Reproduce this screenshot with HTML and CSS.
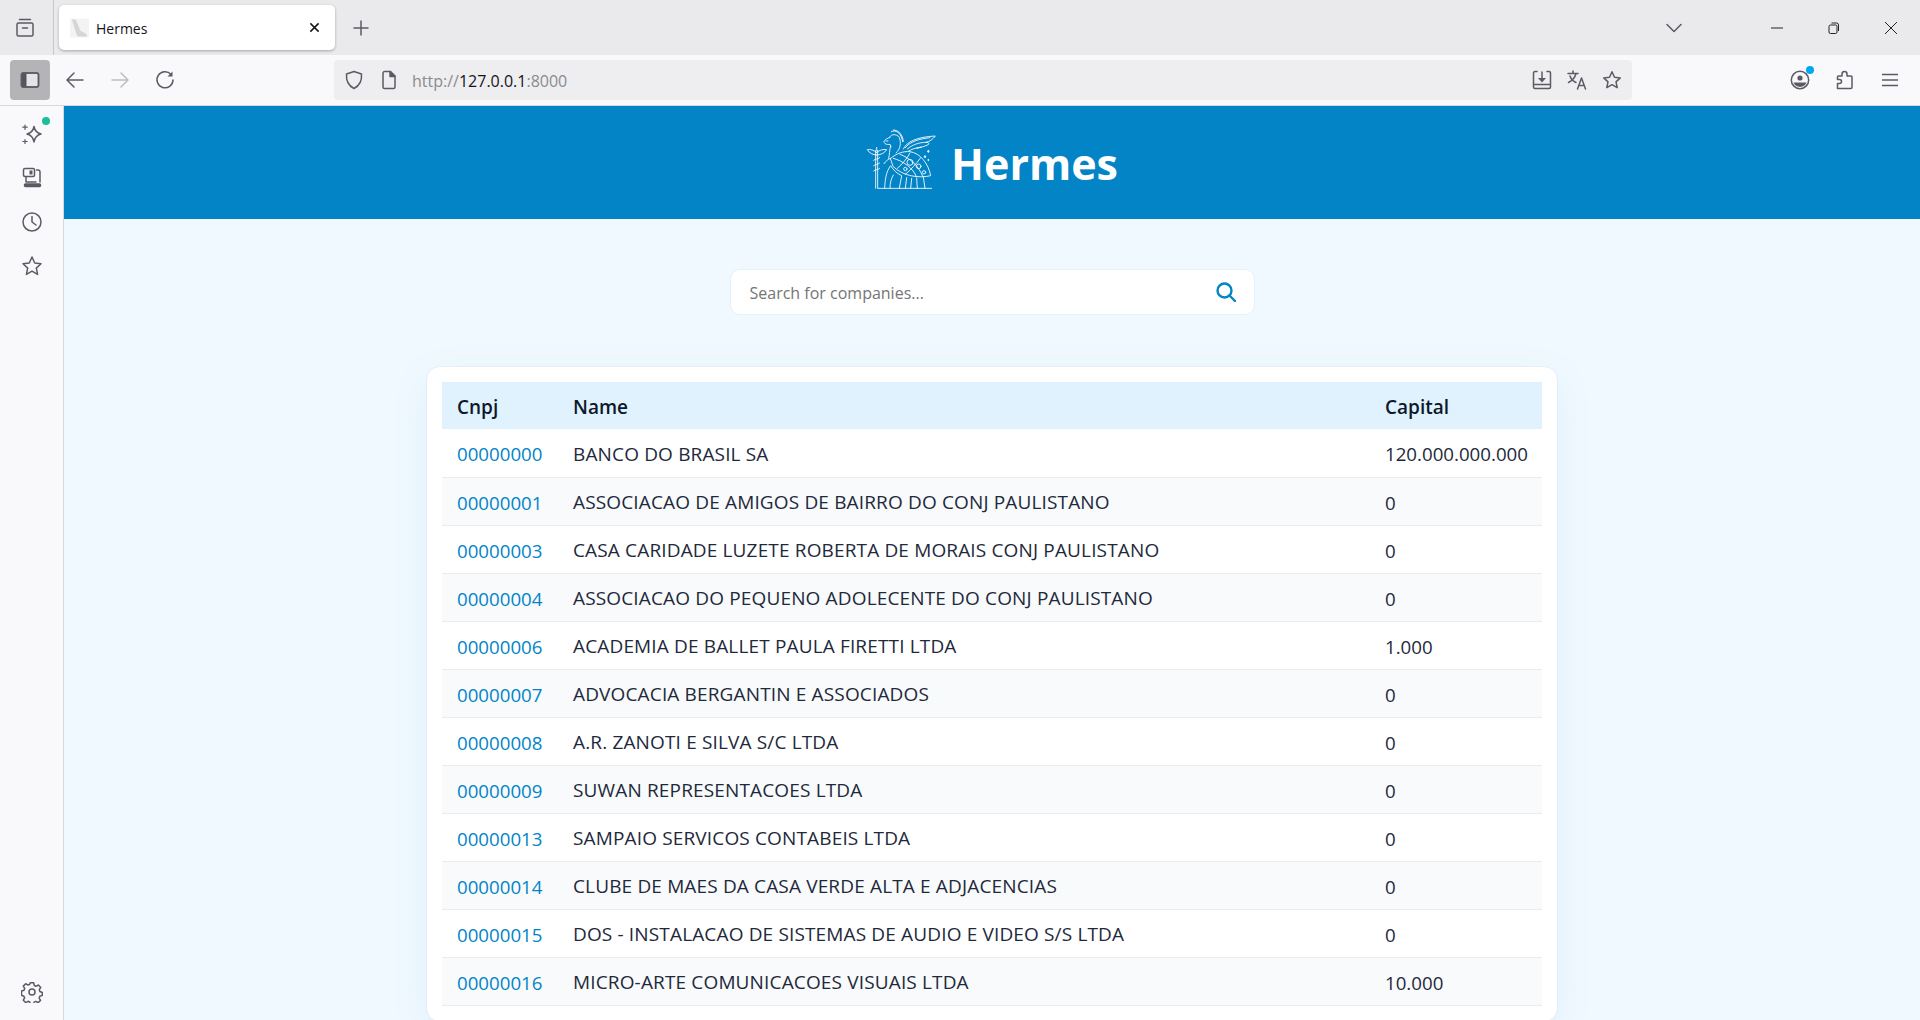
FILE: index.html
```html
<!DOCTYPE html>
<html lang="en">
<head>
  <meta charset="UTF-8">
  <meta name="viewport" content="width=device-width, initial-scale=1.0">
  <title>Hermes</title>
  <link rel="stylesheet" href="styles.css">
</head>
<body>
  <div class="tabstrip">
    <div class="slot view-slot">
      <svg class="icon" viewBox="0 0 20 20"><path d="M4.500 1.500h11M3.500 5h13a1.500 1.500 0 0 1 1.500 1.500v10a1.500 1.500 0 0 1-1.500 1.500h-13A1.500 1.500 0 0 1 2 16.500v-10A1.500 1.500 0 0 1 3.500 5zM7.500 10h5"/></svg>
    </div>
    <div class="tab">
      <svg class="favicon" viewBox="0 0 20 20"><rect width="20" height="20" fill="#f3f3f3"/><path d="M2 1l4 13 2 5h10l-1-3-6-3-5-12z" fill="#d5d5d3"/></svg>
      <span class="tab-title">Hermes</span>
      <svg class="tab-close" viewBox="0 0 12 12"><path d="M1.500 1.500l9 9M10.500 1.500l-9 9"/></svg>
    </div>
    <div class="slot new-tab">
      <svg class="icon plus" viewBox="0 0 16 16"><path d="M8 1v14M1 8h14"/></svg>
    </div>
    <div class="grow"></div>
    <svg class="icon chevron" viewBox="0 0 16 10"><path d="M1 1.500l7 7 7-7"/></svg>
    <div class="window-btns">
      <svg class="win-icon" viewBox="0 0 12 12"><path d="M0 6h12"/></svg>
      <svg class="win-icon" viewBox="0 0 12 12"><rect x="1" y="3" width="8" height="8.500" rx="1.500"/><path d="M3.500 1h5a2 2 0 0 1 2 2v6"/></svg>
      <svg class="win-icon" viewBox="0 0 12 12"><path d="M0 0l12 12M12 0L0 12"/></svg>
    </div>
  </div>

  <div class="toolbar">
    <div class="sidebar-btn">
      <svg class="icon" viewBox="0 0 20 20"><rect x="1.500" y="3" width="17" height="14" rx="2" fill="#e4e4e6"/><rect x="1.500" y="3" width="5" height="14" rx="1.500" fill="#55555c" stroke="none"/><rect x="1.500" y="3" width="17" height="14" rx="2" fill="none"/></svg>
    </div>
    <div class="slot nav-slot">
      <svg class="icon" viewBox="0 0 20 20"><path d="M18 10H2.500M9 3l-7 7 7 7"/></svg>
    </div>
    <div class="slot nav-slot faded">
      <svg class="icon" viewBox="0 0 20 20"><path d="M2 10h15.500M11 3l7 7-7 7"/></svg>
    </div>
    <div class="slot nav-slot">
      <svg class="icon" viewBox="0 0 20 20"><path d="M16 4.500A8 8 0 1 0 18 10"/><path d="M17.500 1.500v5h-5" fill="#5b5b66" stroke="none"/></svg>
    </div>
    <div class="urlbar">
      <svg class="icon url-icon" viewBox="0 0 20 20"><path d="M10 1.500l7.500 2.500c.5 6.500-1.500 11.500-7.500 14.500C4 15.500 2 10.500 2.500 4z"/></svg>
      <svg class="icon url-icon doc" viewBox="0 0 20 20"><path d="M4 3a1.500 1.500 0 0 1 1.500-1.500h6L16 6v11a1.500 1.500 0 0 1-1.500 1.500h-9A1.500 1.500 0 0 1 4 17z"/><path d="M11 1.500L16 6.500h-5z" fill="#5b5b66"/></svg>
      <span class="url"><span class="url-dim">http://</span>127.0.0.1<span class="url-dim">:8000</span></span>
      <div class="grow"></div>
      <svg class="icon url-action" viewBox="0 0 20 20"><path d="M5 1.500H3a1.500 1.500 0 0 0-1.500 1.500v14A1.500 1.500 0 0 0 3 18.500h14a1.500 1.500 0 0 0 1.500-1.500V3A1.500 1.500 0 0 0 17 1.500h-2M2 14.500h16M10 2v8"/><path d="M6 8h8l-4 4.500z" fill="#5b5b66" stroke="none"/></svg>
      <svg class="icon url-action" viewBox="0 0 20 20"><path d="M1 3.500h10M6 1v2.500M9 3.500c-1 4-3.500 7-7.500 9M3 6c1 3 3.500 5.500 6 6.500M10.500 19l4-11 4 11M12 15.500h5"/></svg>
      <svg class="icon url-action" viewBox="0 0 20 20"><path d="M10 1.800l2.500 5.400 5.800.7-4.300 4 1.200 5.800-5.200-3-5.200 3 1.200-5.800-4.300-4 5.800-.7z"/></svg>
    </div>
    <div class="grow"></div>
    <div class="account">
      <svg class="icon" viewBox="0 0 20 20"><circle cx="10" cy="10" r="8.700"/><circle cx="10" cy="8" r="2.600" fill="#5b5b66" stroke="none"/><path d="M3.500 12.500h13a7 7 0 0 1-13 0z" fill="#5b5b66" stroke="none"/></svg>
      <span class="account-dot"></span>
    </div>
    <svg class="icon ext" viewBox="0 0 20 20"><path d="M2.500 18.500v-5h2a2 2 0 0 0 0-4h-2V7a1 1 0 0 1 1-1h3.500V4a2.500 2.500 0 0 1 5 0v2h4a1 1 0 0 1 1 1v10.500a1 1 0 0 1-1 1z"/></svg>
    <svg class="icon burger" viewBox="0 0 16 16"><path d="M0 2.500h16M0 8h16M0 13.500h16"/></svg>
  </div>

  <div class="workspace">
    <aside class="sidebar">
      <div class="side-item">
        <svg class="icon" viewBox="0 0 22 22"><path d="M13 3.500c.8 4.300 2.700 6.500 7 7.500-4.300 1-6.200 3.200-7 8-.8-4.800-2.700-7-7-8 4.300-1 6.200-3.200 7-7.500z"/><path d="M4 2v4.500M1.800 4.200h4.400M4 16.500v4M1.800 18.500h4.400" class="thin"/></svg>
        <span class="side-dot"></span>
      </div>
      <div class="side-item">
        <svg class="icon" viewBox="0 0 22 22"><rect x="2.500" y="1.500" width="11" height="8" rx="1.500"/><rect x="8.500" y="3.500" width="3" height="4" fill="#5b5b66" stroke="none"/><path d="M15.500 3h1.500a2 2 0 0 1 2 2v10M5 10v5h10"/><rect x="3.500" y="17" width="16" height="2.500" rx="1" fill="#5b5b66"/></svg>
      </div>
      <div class="side-item">
        <svg class="icon" viewBox="0 0 22 22"><circle cx="11" cy="11" r="9"/><path d="M11 5.500V11l4 3"/></svg>
      </div>
      <div class="side-item">
        <svg class="icon" viewBox="0 0 22 22"><path d="M11 2l2.700 6 6.300.8-4.700 4.300 1.300 6.300L11 16.200l-5.600 3.200 1.300-6.300L2 8.800 8.300 8z"/></svg>
      </div>
      <div class="grow"></div>
      <div class="side-item">
        <svg class="icon" viewBox="0 0 22 22"><circle cx="11" cy="11" r="3"/><path d="M9.300 1.800h3.400l.6 2.700 1.700.8 2.400-1.300 2.300 2.500-1.400 2.200.6 1.800 2.400 1v2.900l-2.500.9-.6 1.800 1.300 2.300-2.400 2.300-2.300-1.300-1.700.7-.7 2.400H9.400l-.7-2.500-1.700-.7-2.300 1.300-2.400-2.400 1.300-2.300-.7-1.700-2.400-.9V10l2.500-.8.700-1.800-1.400-2.300 2.400-2.400 2.300 1.400 1.700-.8z"/></svg>
      </div>
    </aside>

    <main class="page">
      <header class="site-header">
        <svg class="logo" viewBox="0 0 252 210">
          <path d="M55 190H215"/>
          <!-- caduceus -->
          <path d="M47 190V76M53 190V76M50 76v-9"/>
          <path d="M50 82C40 75 31 72 22 74c5 10 17 16 28 16M50 82c10-7 19-10 30-8-6 10-18 16-30 16"/>
          <path d="M41 106c6-6 12-2 18-8M41 122c6-6 12-2 18-8M41 138c6-6 12-2 18-8"/>
          <!-- head and helmet -->
          <path d="M94 20c14-8 30 4 34 30M100 15c16 0 28 14 30 34M89 36c6-9 18-10 29 0"/>
          <path d="M90 37c-8 3-16 7-18 13 0 6 8 10 18 8l3 8M118 38c6 14 4 34-10 46M92 62c-4 14-3 26-6 38"/>
          <path d="M78 48h6"/>
          <!-- wing -->
          <path d="M130 72c10-22 40-36 96-39-8 9-16 17-28 19 6 0 10 2 8 6-10 6-26 10-36 12"/>
          <path d="M136 68c14-18 39-26 74-30M142 72c14-12 34-20 56-20M146 78c14-8 26-10 38-12"/>
          <!-- shell -->
          <path d="M92 100c18-15 38-22 58-20 30 4 55 35 62 72-32 8-82 3-112-27z"/>
          <path d="M100 100c30 8 60 30 70 56M120 88c28 10 56 34 68 66M150 84c-10 18-22 32-38 46M182 98c-14 20-30 36-46 50"/>
          <circle cx="150" cy="112" r="9"/><circle cx="176" cy="124" r="7"/><circle cx="136" cy="132" r="5"/><circle cx="192" cy="142" r="5"/>
          <!-- arm and legs -->
          <path d="M72 116c6-8 12-14 20-16M74 190c1-25 4-50 18-68 8 13 18 23 33 30l-7 38M90 190c0-18 4-30 10-40"/>
          <path d="M140 158l-4 32M155 160l-3 30M170 160l2 30M190 156l5 34"/>
          <path class="logo-fill" d="M205 74l4 5-4 5-4-5zM195 90l4 5-4 5-4-5zM205 101l3 4-3 4-3-4z"/>
        </svg>
        <h1 class="site-title">Hermes</h1>
      </header>

      <div class="search">
        <input class="search-input" type="text" placeholder="Search for companies...">
        <svg class="search-icon" viewBox="0 0 20 20"><circle cx="8.500" cy="8.500" r="7"/><path d="M13.500 13.500L19 19"/></svg>
      </div>

      <section class="card">
        <table class="companies">
          <colgroup>
            <col class="col-cnpj"><col class="col-name"><col class="col-capital">
          </colgroup>
          <thead>
            <tr><th>Cnpj</th><th>Name</th><th>Capital</th></tr>
          </thead>
          <tbody>
            <tr><td><a href="#">00000000</a></td><td class="name">BANCO DO BRASIL SA</td><td>120.000.000.000</td></tr>
            <tr><td><a href="#">00000001</a></td><td class="name">ASSOCIACAO DE AMIGOS DE BAIRRO DO CONJ PAULISTANO</td><td>0</td></tr>
            <tr><td><a href="#">00000003</a></td><td class="name">CASA CARIDADE LUZETE ROBERTA DE MORAIS CONJ PAULISTANO</td><td>0</td></tr>
            <tr><td><a href="#">00000004</a></td><td class="name">ASSOCIACAO DO PEQUENO ADOLECENTE DO CONJ PAULISTANO</td><td>0</td></tr>
            <tr><td><a href="#">00000006</a></td><td class="name">ACADEMIA DE BALLET PAULA FIRETTI LTDA</td><td>1.000</td></tr>
            <tr><td><a href="#">00000007</a></td><td class="name">ADVOCACIA BERGANTIN E ASSOCIADOS</td><td>0</td></tr>
            <tr><td><a href="#">00000008</a></td><td class="name">A.R. ZANOTI E SILVA S/C LTDA</td><td>0</td></tr>
            <tr><td><a href="#">00000009</a></td><td class="name">SUWAN REPRESENTACOES LTDA</td><td>0</td></tr>
            <tr><td><a href="#">00000013</a></td><td class="name">SAMPAIO SERVICOS CONTABEIS LTDA</td><td>0</td></tr>
            <tr><td><a href="#">00000014</a></td><td class="name">CLUBE DE MAES DA CASA VERDE ALTA E ADJACENCIAS</td><td>0</td></tr>
            <tr><td><a href="#">00000015</a></td><td class="name">DOS - INSTALACAO DE SISTEMAS DE AUDIO E VIDEO S/S LTDA</td><td>0</td></tr>
            <tr><td><a href="#">00000016</a></td><td class="name">MICRO-ARTE COMUNICACOES VISUAIS LTDA</td><td>10.000</td></tr>
          </tbody>
        </table>
      </section>
    </main>
  </div>
</body>
</html>
```

FILE: styles.css
```css
* {
  box-sizing: border-box;
}
html, body {
  height: 100%;
}
body {
  margin: 0;
  height: 100vh;
  overflow: hidden;
  display: flex;
  flex-direction: column;
  font-family: "Open Sans", "Noto Sans", sans-serif;
  color: #1e293b;
  background: #f9f9fb;
}
.grow {
  flex: 1;
}
.icon {
  display: block;
  width: 20px;
  height: 20px;
  flex: none;
  fill: none;
  stroke: #5b5b66;
  stroke-width: 1.5;
  stroke-linecap: round;
  stroke-linejoin: round;
}
.slot {
  display: flex;
  align-items: center;
  justify-content: center;
  flex: none;
}

/* tab strip */
.tabstrip {
  height: 55px;
  flex: none;
  display: flex;
  align-items: center;
  background: #eaeaed;
}
.view-slot {
  width: 54px;
  height: 55px;
  border-right: 1px solid #c8c8cc;
  padding-right: 4px;
}
.tab {
  width: 276px;
  height: 45px;
  margin-left: 5px;
  display: flex;
  align-items: center;
  padding: 0 15px 0 11px;
  background: #fff;
  border-radius: 5px;
  box-shadow: 0 1px 3px rgba(0, 0, 0, 0.3);
}
.favicon {
  width: 19px;
  height: 20px;
  flex: none;
}
.tab-title {
  flex: 1;
  margin-left: 7px;
  padding-top: 1px;
  font-size: 14px;
  color: #15141a;
}
.tab-close {
  width: 11px;
  height: 11px;
  fill: none;
  stroke: #15141a;
  stroke-width: 1.6;
}
.new-tab {
  width: 52px;
}
.plus {
  width: 16px;
  height: 16px;
}
.chevron {
  width: 16px;
  height: 10px;
  margin-right: 89px;
}
.window-btns {
  display: flex;
  gap: 45px;
  padding-right: 23px;
}
.win-icon {
  width: 12px;
  height: 12px;
  fill: none;
  stroke: #222;
  stroke-width: 1;
}

/* toolbar */
.toolbar {
  height: 51px;
  flex: none;
  display: flex;
  align-items: center;
  padding: 0 22px 1px 10px;
  background: #f9f9fb;
  border-bottom: 1px solid #d8d8dc;
}
.sidebar-btn {
  width: 40px;
  height: 40px;
  display: flex;
  align-items: center;
  justify-content: center;
  background: #b4b4b7;
  border-radius: 4px;
  margin-right: 2px;
}
.nav-slot {
  width: 45px;
  height: 40px;
}
.faded .icon {
  stroke: #bdbdc2;
}
.urlbar {
  width: 1298px;
  height: 40px;
  margin-left: 147px;
  display: flex;
  align-items: center;
  padding: 0 10px;
  background: #eeeef0;
  border-radius: 4px;
}
.url-icon.doc {
  margin-left: 15px;
}
.url {
  margin-left: 13px;
  padding-top: 2px;
  font-size: 16px;
  color: #15141a;
}
.url-dim {
  color: #8a8a90;
}
.url-action {
  margin-left: 15px;
}
.account {
  position: relative;
}
.account-dot {
  position: absolute;
  top: -4px;
  right: -4px;
  width: 8px;
  height: 8px;
  border-radius: 50%;
  background: #00a8f0;
}
.ext {
  margin-left: 25px;
}
.burger {
  width: 16px;
  height: 16px;
  margin-left: 27px;
}

/* sidebar */
.workspace {
  flex: 1;
  min-height: 0;
  display: flex;
}
.sidebar {
  width: 64px;
  flex: none;
  display: flex;
  flex-direction: column;
  padding: 6px 0;
  background: #f9f9fb;
  border-right: 1px solid #d8d8dc;
}
.side-item {
  position: relative;
  height: 44px;
  display: flex;
  align-items: center;
  justify-content: center;
  padding-left: 1px;
}
.side-item .icon {
  width: 22px;
  height: 22px;
}
.side-item .thin {
  stroke-width: 1.2;
}
.side-dot {
  position: absolute;
  top: 5px;
  left: 42px;
  width: 8px;
  height: 8px;
  border-radius: 50%;
  background: #1dbf98;
}

/* page */
.page {
  flex: 1;
  min-width: 0;
  overflow: hidden;
  background: #f0f9ff;
}
.site-header {
  height: 113px;
  display: flex;
  align-items: center;
  justify-content: center;
  gap: 7px;
  padding-right: 6px;
  background: #0284c7;
}
.logo {
  width: 84px;
  height: 70px;
  margin-bottom: 5px;
  fill: none;
  stroke: #fff;
  stroke-width: 2.6;
  stroke-linecap: round;
  stroke-linejoin: round;
}
.logo-fill {
  fill: #fff;
  stroke: none;
}
.site-title {
  margin: 0;
  padding-top: 2px;
  font-size: 43px;
  font-weight: 700;
  color: #fff;
}
.search {
  position: relative;
  width: 525px;
  margin: 50px auto 51px;
}
.search-input {
  display: block;
  width: 100%;
  height: 46px;
  padding: 2px 50px 0 19px;
  border: 1px solid #e0f2fe;
  border-radius: 10px;
  font: 16px "Open Sans", sans-serif;
  background: #fff;
}
.search-input::placeholder {
  color: #757575;
  opacity: 1;
}
.search-icon {
  position: absolute;
  top: 13px;
  right: 19px;
  width: 20px;
  height: 20px;
  fill: none;
  stroke: #0284c7;
  stroke-width: 2.4;
  stroke-linecap: round;
}
.card {
  width: 1132px;
  margin: 0 auto;
  padding: 16px;
  background: #fff;
  border: 1px solid #e6eef5;
  border-radius: 14px;
  box-shadow: 0 10px 40px rgba(2, 132, 199, 0.07);
}
.companies {
  width: 1100px;
  margin: -1px;
  table-layout: fixed;
  border-collapse: collapse;
  font-size: 18.700px;
}
.col-cnpj {
  width: 116px;
}
.col-capital {
  width: 172px;
}
.companies th {
  height: 47px;
  padding: 3px 15px 0;
  text-align: left;
  font-size: 19px;
  font-weight: 600;
  color: #0f172a;
  background: #e0f2fe;
}
.companies td {
  height: 48px;
  padding: 2px 15px 0;
  white-space: nowrap;
  color: #1e293b;
  border-bottom: 1px solid #e8edf2;
}
.companies td.name {
  font-size: 19px;
  letter-spacing: 0.15px;
}
.companies tbody tr:nth-child(even) td {
  background: #f8fafc;
}
.companies a {
  color: #0284c7;
  text-decoration: none;
}
```
